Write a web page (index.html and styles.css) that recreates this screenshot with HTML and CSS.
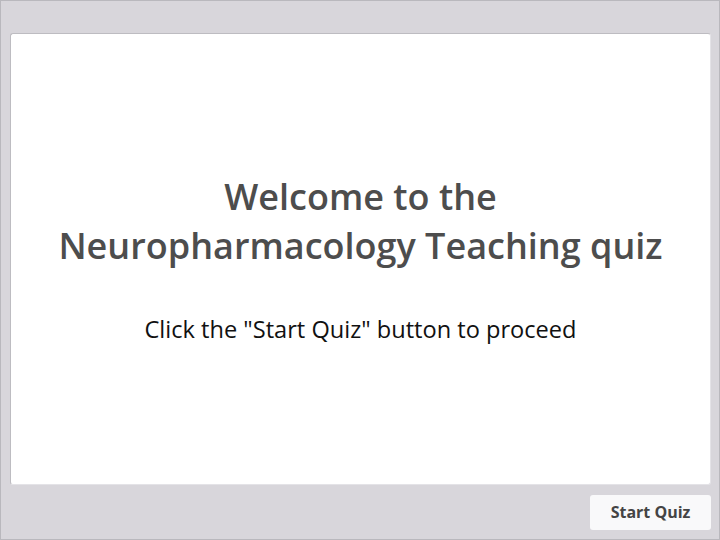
FILE: index.html
```html
<!DOCTYPE html>
<html>
<head>
<meta charset="utf-8">
<link rel="stylesheet" href="styles.css">
</head>
<body>
<div class="frame">
  <main class="panel">
    <h1 class="title">Welcome to the<br>Neuropharmacology Teaching quiz</h1>
    <p class="subtitle">Click the "Start Quiz" button to proceed</p>
  </main>
  <footer class="footer">
    <button class="start-btn">Start Quiz</button>
  </footer>
</div>
</body>
</html>
```
FILE: styles.css
```css
html, body {
  margin: 0;
  padding: 0;
  width: 720px;
  height: 540px;
  overflow: hidden;
  font-family: "Open Sans", "Noto Sans", sans-serif;
}
.frame {
  box-sizing: border-box;
  width: 720px;
  height: 540px;
  background: #d8d6db;
  border: 1px solid #b9b8bd;
  padding: 32px 8px 0 9px;
  display: flex;
  flex-direction: column;
}
.panel {
  box-sizing: border-box;
  height: 452px;
  padding-bottom: 3px;
  background: #ffffff;
  border-top: 1px solid #bdbcc1;
  border-left: 1px solid #bdbcc1;
  border-right: 1px solid #e4e3e7;
  border-bottom: 1px solid #e4e3e7;
  border-radius: 3px;
  display: flex;
  flex-direction: column;
  align-items: center;
  justify-content: center;
  text-align: center;
}
.title {
  margin: 0;
  font-size: 36px;
  font-weight: 600;
  line-height: 49px;
  color: #4d4d4d;
}
.subtitle {
  margin: 44px 0 0;
  font-size: 23.6px;
  line-height: 30px;
  color: #111111;
}
.footer {
  display: flex;
  justify-content: flex-end;
  padding-top: 10px;
}
.start-btn {
  width: 121px;
  height: 35px;
  padding: 0 0 2px;
  background: #f9f9fa;
  border: none;
  border-radius: 3px;
  font-family: "Open Sans", "Noto Sans", sans-serif;
  font-size: 16px;
  font-weight: 700;
  color: #444444;
}
```
